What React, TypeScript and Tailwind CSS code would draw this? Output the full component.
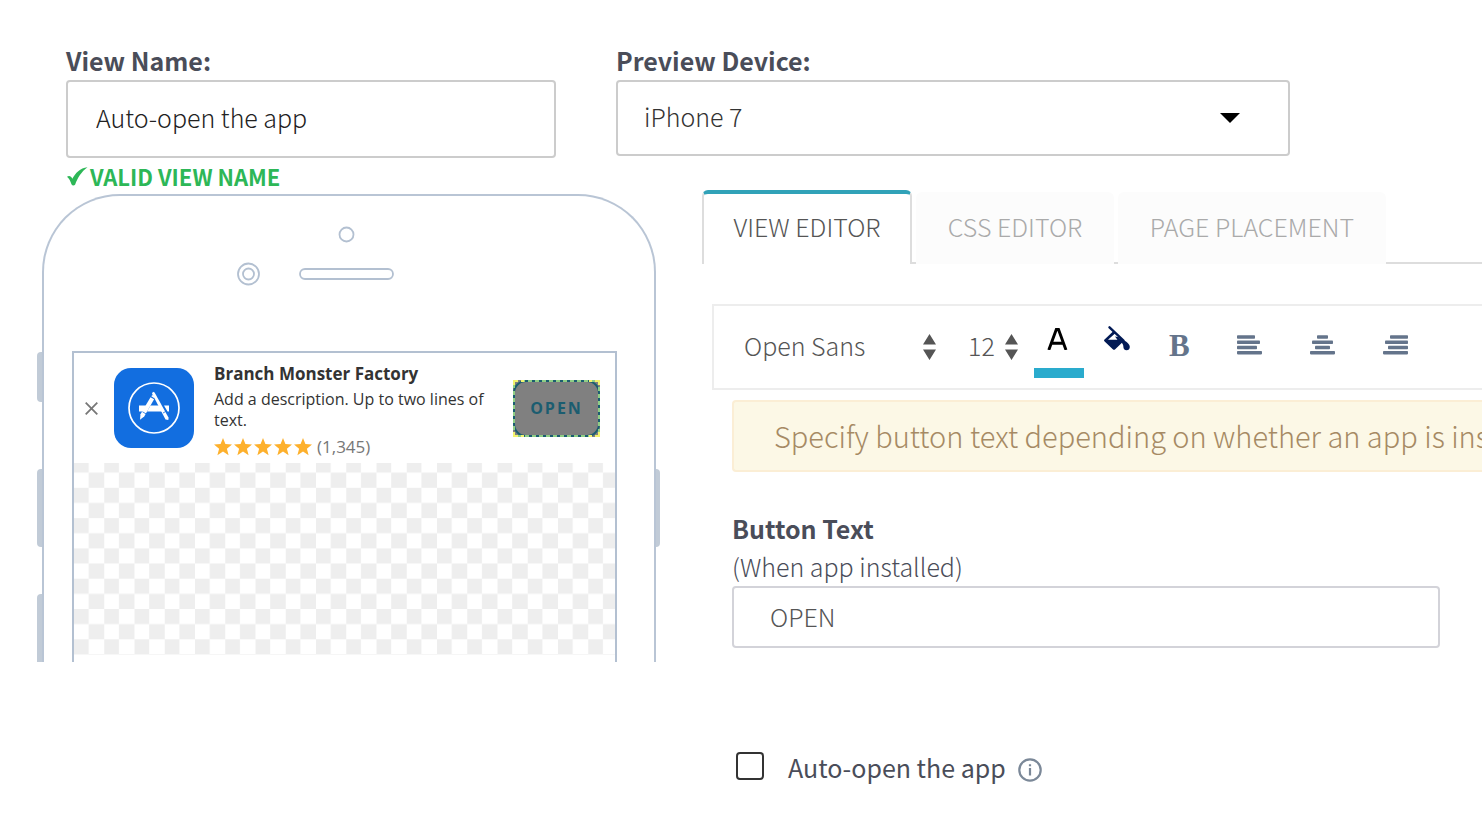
import React from "react";

const BODY_FONT = "font-['Noto_Sans_CJK_SC',sans-serif]";
const STAR = "M9 0l2.400 6.100 6.600.4-5.100 4.200 1.700 6.500L9 13.600l-5.600 3.600 1.700-6.500L0 6.500l6.600-.4z";

function Sorter() {
  return (
    <svg viewBox="0 0 13 26" className="pointer-events-none h-[26px] w-[13px] self-center justify-self-end [grid-area:1/1]" fill="#555" aria-hidden="true">
      <path d="M6.500 0L13 10.500H0zM6.500 26L0 15.500h13z" />
    </svg>
  );
}

function AlignIcon({ align }: { align: "left" | "center" | "right" }) {
  const widths = align === "center" ? [11, 21, 15, 25] : [18, 23, 20, 25];
  return (
    <svg viewBox="0 0 25 20" className="h-5 w-[25px]" fill="#64748b" aria-hidden="true">
      {widths.map((w, i) => (
        <rect key={i} x={align === "left" ? 0 : align === "right" ? 25 - w : (25 - w) / 2} y={i * 5.2 + 0.3} width={w} height="3.500" rx="0.800" />
      ))}
    </svg>
  );
}

function AppIcon() {
  return (
    <svg viewBox="0 0 80 80" className="size-20 shrink-0" aria-hidden="true">
      <rect width="80" height="80" rx="17" fill="#126ee0" />
      <circle cx="40" cy="40" r="25" fill="none" stroke="#fff" strokeWidth="1.700" />
      <path d="M25 37.500h7.500l-3.300 6H25zM36.500 37.500h8.500l3.500 6H33zM50 37.500h5v6h-1.500z" fill="#fff" />
      <path d="M38 25.500l1-1.700 1.600.6 14 25.300-.3 2.300-2.800-.6z" fill="#fff" />
      <path d="M36.500 29.200l3.600 2.100L30.200 48.500l-4.200 3.300.5-5.500z" fill="#fff" />
      <path d="M37.300 28.200l1-1.300 2.300 1.500-.5 1.600z" fill="#fff" />
      <path d="M28.500 43.800l3.600 2.100M49 45l3.500-2" stroke="#126ee0" strokeWidth="0.800" />
    </svg>
  );
}

function Banner() {
  return (
    <div className="flex h-[110px] items-center bg-white pr-[15px] pl-[11px] font-['Open_Sans',sans-serif] text-[#333]">
      <button type="button" aria-label="Close" className="mr-4 shrink-0">
        <svg viewBox="0 0 13 13" className="size-[13px]" stroke="#777" strokeWidth="1.800" aria-hidden="true">
          <path d="M.7.7l11.600 11.600M12.300.7L.7 12.300" />
        </svg>
      </button>
      <AppIcon />
      <div className="ml-5 flex-1 self-start pt-[10px]">
        <div className="text-[17px] leading-[22px] font-bold">Branch Monster Factory</div>
        <p className="mt-1 text-base leading-[21px]">Add a description. Up to two lines of text.</p>
        <div className="mt-[5px] flex items-center text-[17px] leading-[22px] text-[#777]">
          <svg viewBox="0 0 98 18" className="mr-[5px] h-[18px] w-[98px]" fill="#fdb02c" aria-label="5 stars">
            {[0, 20, 40, 60, 80].map((x) => (
              <path key={x} d={STAR} transform={`translate(${x} 0)`} />
            ))}
          </svg>
          (1,345)
        </div>
      </div>
      <button type="button" className="relative h-[57px] w-[87px] shrink-0 bg-[#808080] text-base font-bold tracking-[2px] text-[#1b5d70]">
        OPEN
        <svg viewBox="0 0 87 57" className="absolute inset-0 size-full" fill="none" aria-hidden="true">
          <rect x="1" y="1" width="85" height="55" rx="12" stroke="#1b5d70" strokeWidth="2" />
          <rect x="1" y="1" width="85" height="55" stroke="#8fce85" strokeWidth="2" strokeDasharray="4 3" />
          <path d="M1 5V1h4M8 1h3M76 1h3M82 1h4v4M86 52v4h-4M79 56h-3M11 56H8M5 56H1v-4" stroke="#f3f36e" strokeWidth="2" />
        </svg>
      </button>
    </div>
  );
}

function Phone() {
  return (
    <div className="relative mt-1 h-[468px] w-[623px] shrink-0 pl-[5px]">
      <span className="absolute top-[158px] left-0 h-[50px] w-[6px] rounded-l-[4px] bg-[#c1cbd7]" />
      <span className="absolute top-[275px] left-0 h-[78px] w-[6px] rounded-l-[4px] bg-[#c1cbd7]" />
      <span className="absolute top-[400px] left-0 h-[68px] w-[6px] rounded-tl-[4px] bg-[#c1cbd7]" />
      <span className="absolute top-[275px] right-0 h-[78px] w-[5px] rounded-r-[4px] bg-[#c1cbd7]" />
      <div className="relative h-full w-[614px] rounded-t-[78px] border-2 border-b-0 border-[#b9c5d5]">
        <svg viewBox="44 196 610 155" className="block h-[155px] w-full" fill="none" stroke="#b3c0d1" strokeWidth="1.800" aria-hidden="true">
          <circle cx="346.500" cy="234.500" r="7" />
          <circle cx="248.500" cy="274" r="10.500" />
          <circle cx="248.500" cy="274" r="5.500" />
          <rect x="300" y="269" width="93" height="10" rx="5" />
        </svg>
        <div className="ml-7 h-[311px] w-[545px] border-2 border-b-0 border-[#b3c0d1]">
          <Banner />
          <svg className="block h-[192px] w-full" aria-hidden="true">
            <defs>
              <pattern id="checker" width="30.250" height="30.300" patternUnits="userSpaceOnUse" y="-5.500">
                <rect width="14.700" height="15.100" fill="#eee" />
                <rect x="14.700" y="15.100" width="15.550" height="15.200" fill="#eee" />
              </pattern>
            </defs>
            <rect width="100%" height="100%" fill="url(#checker)" />
          </svg>
        </div>
      </div>
    </div>
  );
}

function Toolbar() {
  return (
    <div className="mt-10 ml-[10px] flex h-[86px] border-2 border-r-0 border-[#ededed] pl-[30px] text-[#555]">
      <div className="grid w-[192px] self-center">
        <select aria-label="Font" className="w-full appearance-none bg-transparent pb-1 text-[25px] leading-8 font-light outline-none [grid-area:1/1]">
          <option>Open Sans</option>
        </select>
        <Sorter />
      </div>
      <div className="ml-[32px] grid w-[50px] self-center">
        <select aria-label="Font size" className="w-full appearance-none bg-transparent pb-1 text-[25px] leading-8 font-light outline-none [grid-area:1/1]">
          <option>12</option>
        </select>
        <Sorter />
      </div>
      <button type="button" aria-label="Text colour" className="ml-4 flex h-[72px] w-[50px] flex-col items-center justify-between pt-[22px]">
        <svg viewBox="0 0 24 22" className="h-[22px] w-6" fill="none" stroke="#000" strokeWidth="2.900" aria-hidden="true">
          <path d="M1.800 22L9.300 1.500h2.200L19 22M4.500 15.200h12" />
        </svg>
        <span className="h-[10px] w-full bg-[#2aabcd]" />
      </button>
      <button type="button" aria-label="Background colour" className="ml-5 self-start pt-5">
        <svg viewBox="0 0 26 25" className="h-[25px] w-[26px]" aria-hidden="true">
          <path d="M5.500 1.300l14 13.400" stroke="#021a55" strokeWidth="2.400" fill="none" strokeLinecap="round" />
          <path d="M9.500 5L.3 13.700c-.4.500-.3 1 .1 1.500l8.400 8.100c.8.700 1.600.7 2.400 0l8.600-8.300-3-3-3.800 1.800H4l7.300-6.500z" fill="#021a55" />
          <path d="M11 10.500l5.500 1-2.500 3z" fill="#021a55" />
          <path d="M18.500 14c3.500.8 7.300 4 7.300 7 0 2-1.300 3.300-3.200 3.300-2.200 0-3.200-1.500-3.200-3.300 0-2-1-3.500-2-5z" fill="#021a55" />
        </svg>
      </button>
      <button type="button" aria-label="Bold" className="ml-[39px] w-5 self-center pb-[2px] font-['Liberation_Serif',serif] text-[31px] leading-8 font-bold text-[#64748b]">
        B
      </button>
      <button type="button" aria-label="Align left" className="ml-[48px] self-center pb-1"><AlignIcon align="left" /></button>
      <button type="button" aria-label="Align centre" className="ml-[48px] self-center pb-1"><AlignIcon align="center" /></button>
      <button type="button" aria-label="Align right" className="ml-[48px] self-center pb-1"><AlignIcon align="right" /></button>
    </div>
  );
}

function Editor() {
  return (
    <section className="ml-[42px] min-w-0 flex-1">
      <div role="tablist" className="flex h-[74px] items-end gap-1 border-b-2 border-[#ddd] text-[25px] font-light">
        <button type="button" role="tab" aria-selected="true" className="-mb-[2px] h-[74px] w-[210px] shrink-0 rounded-t-md border-x-2 border-t-4 border-x-[#ddd] border-t-[#31a2b8] bg-white pb-1 text-[#555]">
          VIEW EDITOR
        </button>
        <button type="button" role="tab" aria-selected="false" className="-mb-[2px] h-[72px] w-[198px] shrink-0 rounded-t-md bg-[#fcfcfc] pb-[2px] text-[#aaa]">
          CSS EDITOR
        </button>
        <button type="button" role="tab" aria-selected="false" className="-mb-[2px] h-[72px] w-[268px] shrink-0 rounded-t-md bg-[#fcfcfc] pb-[2px] text-[#aaa]">
          PAGE PLACEMENT
        </button>
      </div>
      <Toolbar />
      <div className="ml-[30px]">
        <p className="mt-[10px] h-[72px] overflow-hidden rounded-l-[4px] border-2 border-r-0 border-[#fbeed5] bg-[#fcf8e6] pl-10 text-[29px] leading-[66px] font-light whitespace-nowrap text-[#a68a64]">
          Specify button text depending on whether an app is installed
        </p>
        <div className="mr-[42px]">
          <label htmlFor="button-text" className="mt-[42px] block text-[25px] leading-7 text-[#4a4d59]">
            <span className="block font-bold">Button Text</span>
            <span className="mt-[10px] block font-light">(When app installed)</span>
          </label>
          <input id="button-text" defaultValue="OPEN" className="mt-[6px] block h-[62px] w-full rounded-[4px] border-2 border-[#d3d3d9] px-9 pb-[2px] text-[25px] font-light text-[#555] outline-none" />
          <div className="mt-[104px] flex h-7 items-center pl-1">
            <input id="auto-open" type="checkbox" className="size-7 appearance-none rounded-[4px] border-2 border-[#333] bg-white" />
            <label htmlFor="auto-open" className="ml-6 pt-[2px] text-[25px] leading-7 font-normal text-[#4a4d59]">
              Auto-open the app
            </label>
            <svg viewBox="0 0 24 24" className="mt-2 ml-3 size-6" fill="none" stroke="#7b8898" strokeWidth="2.200" aria-hidden="true">
              <circle cx="12" cy="12" r="10.700" />
              <path d="M12 10v7.500M12 6.300v2" />
            </svg>
          </div>
        </div>
      </div>
    </section>
  );
}

export default function App() {
  return (
    <main className={`min-h-screen overflow-hidden bg-white pt-[46px] ${BODY_FONT}`}>
      <div className="flex items-start gap-[60px] pl-[66px]">
        <div className="w-[490px]">
          <label htmlFor="view-name" className="mb-[6px] block text-[25px] leading-7 font-bold text-[#4a4d59]">View Name:</label>
          <input id="view-name" defaultValue="Auto-open the app" className="block h-[78px] w-full rounded-[4px] border-2 border-[#ccc] px-7 pb-1 text-[25px] font-light text-[#222] outline-none" />
          <div className="mt-1 flex items-center text-[22px] leading-7 font-bold text-[#2db757]">
            <svg viewBox="0 0 22 19" className="mr-[2px] h-[19px] w-[22px]" fill="currentColor" aria-hidden="true">
              <path d="M1 9.800c2-1.600 4.200-.8 5.300 2C9.500 6 14 1 21.500.2 15.500 4.500 11.500 11 9.200 17.500c-.9 1.200-3 1.200-3.600 0C4.500 14.500 3.200 11.500 1 9.800z" />
            </svg>
            VALID VIEW NAME
          </div>
        </div>
        <div className="w-[674px]">
          <label htmlFor="device" className="mb-[6px] block text-[25px] leading-7 font-bold text-[#4a4d59]">Preview Device:</label>
          <div className="grid">
            <select id="device" className="h-[76px] w-full appearance-none rounded-[4px] border-2 border-[#ccc] bg-white px-[26px] pb-[2px] text-[25px] font-light text-[#333] outline-none [grid-area:1/1]">
              <option>iPhone 7</option>
            </select>
            <svg viewBox="0 0 20 10" className="pointer-events-none mr-[50px] h-[10px] w-5 self-center justify-self-end [grid-area:1/1]" aria-hidden="true">
              <path d="M0 0h20L10 10z" />
            </svg>
          </div>
        </div>
      </div>
      <div className="flex items-start pl-[37px]">
        <Phone />
        <Editor />
      </div>
    </main>
  );
}
